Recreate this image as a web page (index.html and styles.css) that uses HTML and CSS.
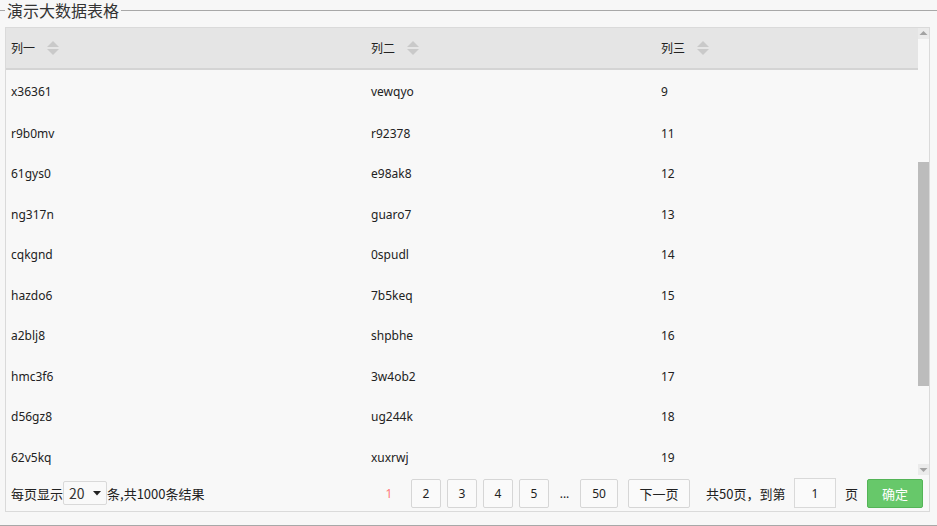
FILE: index.html
```html
<!DOCTYPE html>
<html lang="zh">
<head>
<meta charset="utf-8">
<title>演示大数据表格</title>
<link rel="stylesheet" href="styles.css">
</head>
<body>
<fieldset class="frame">
  <legend class="frame-title">演示大数据表格</legend>
  <div class="panel">
    <div class="grid-area">
      <div class="grid-main">
        <div class="grid-head">
          <div class="hcell">列一<svg class="sort" width="12" height="14" viewBox="0 0 12 14"><path d="M6 0 L12 6 L0 6 Z" fill="#c9c9c9"/><path d="M0 8 L12 8 L6 14 Z" fill="#c9c9c9"/></svg></div>
          <div class="hcell">列二<svg class="sort" width="12" height="14" viewBox="0 0 12 14"><path d="M6 0 L12 6 L0 6 Z" fill="#c9c9c9"/><path d="M0 8 L12 8 L6 14 Z" fill="#c9c9c9"/></svg></div>
          <div class="hcell">列三<svg class="sort" width="12" height="14" viewBox="0 0 12 14"><path d="M6 0 L12 6 L0 6 Z" fill="#c9c9c9"/><path d="M0 8 L12 8 L6 14 Z" fill="#c9c9c9"/></svg></div>
        </div>
        <div class="grid-body">
          <div class="row first"><span>x36361</span><span>vewqyo</span><span>9</span></div>
          <div class="row"><span>r9b0mv</span><span>r92378</span><span>11</span></div>
          <div class="row"><span>61gys0</span><span>e98ak8</span><span>12</span></div>
          <div class="row"><span>ng317n</span><span>guaro7</span><span>13</span></div>
          <div class="row"><span>cqkgnd</span><span>0spudl</span><span>14</span></div>
          <div class="row"><span>hazdo6</span><span>7b5keq</span><span>15</span></div>
          <div class="row"><span>a2blj8</span><span>shpbhe</span><span>16</span></div>
          <div class="row"><span>hmc3f6</span><span>3w4ob2</span><span>17</span></div>
          <div class="row"><span>d56gz8</span><span>ug244k</span><span>18</span></div>
          <div class="row"><span>62v5kq</span><span>xuxrwj</span><span>19</span></div>
        </div>
      </div>
      <div class="vscroll">
        <div class="sb-btn"><svg width="11" height="11" viewBox="0 0 11 11"><path d="M1.5 7 L5.5 3 L9.5 7 Z" fill="#a3a3a3"/></svg></div>
        <div class="sb-track"><div class="sb-thumb"></div></div>
        <div class="sb-btn"><svg width="11" height="11" viewBox="0 0 11 11"><path d="M1.5 4 L9.5 4 L5.5 8 Z" fill="#a3a3a3"/></svg></div>
      </div>
    </div>
    <div class="pager">
      <div class="pager-left">
        <span>每页显示</span>
        <div class="select"><span>20</span><svg width="8" height="5" viewBox="0 0 8 5"><path d="M0 0 L8 0 L4 4.5 Z" fill="#222"/></svg></div>
        <span>条,共1000条结果</span>
      </div>
      <div class="pager-right">
        <span class="pg-cur">1</span>
        <span class="pg-btn">2</span>
        <span class="pg-btn">3</span>
        <span class="pg-btn">4</span>
        <span class="pg-btn">5</span>
        <span class="pg-dots">...</span>
        <span class="pg-btn w50">50</span>
        <span class="pg-btn next">下一页</span>
        <span class="pg-total">共50页，到第</span>
        <span class="pg-input">1</span>
        <span class="pg-unit">页</span>
        <span class="pg-go">确定</span>
      </div>
    </div>
  </div>
</fieldset>
</body>
</html>
```
FILE: styles.css
```css
html, body {
  margin: 0;
  padding: 0;
  background: #f7f7f7;
}
body {
  font-family: "Noto Sans", "Noto Sans CJK SC", sans-serif;
  font-size: 12px;
  color: #222;
}
.frame {
  box-sizing: border-box;
  height: 526px;
  margin: 0;
  padding: 7px 0 0 5px;
  border: none;
  border-top: 1px solid #a8a8a8;
  border-bottom: 1px solid #a8a8a8;
  min-width: 0;
}
.frame-title {
  padding: 0 2px;
  font-size: 16px;
  line-height: 20px;
  color: #333;
  font-family: "Noto Sans CJK SC", sans-serif;
}
.panel {
  width: 923px;
  height: 483px;
  border: 1px solid #dadada;
  background: #f8f8f8;
  display: flex;
  flex-direction: column;
}
.grid-area {
  height: 447px;
  display: flex;
}
.grid-main {
  width: 912px;
  overflow: hidden;
}
.grid-head {
  height: 40px;
  background: #e5e5e5;
  border-bottom: 2px solid #d4d4d4;
  display: grid;
  grid-template-columns: 360px 290px 1fr;
}
.hcell {
  display: flex;
  align-items: center;
  padding-left: 5px;
  color: #222;
}
.sort {
  margin-left: 12px;
}
.grid-body {
  display: flex;
  flex-direction: column;
}
.row {
  flex: none;
  height: 40.5px;
  display: grid;
  grid-template-columns: 360px 290px 1fr;
  align-items: center;
}
.row.first {
  height: 42px;
  margin-bottom: 1px;
}
.row span {
  padding-left: 5px;
}
.vscroll {
  width: 11px;
  margin-left: 0;
  display: flex;
  flex-direction: column;
}
.sb-btn {
  height: 11px;
  background: #ebebeb;
  display: flex;
}
.sb-track {
  flex: 1;
  padding-top: 123px;
}
.sb-thumb {
  height: 224px;
  background: #bcbcbc;
}
.pager {
  flex: 1;
  display: flex;
  align-items: center;
  padding: 0 6px 0 5px;
}
.pager-left {
  display: flex;
  align-items: center;
  font-size: 13px;
  font-family: "Noto Sans CJK SC", sans-serif;
}
.select {
  box-sizing: border-box;
  width: 44px;
  height: 24px;
  border: 1px solid #d9d9d9;
  border-radius: 2px;
  background: #f9f9f9;
  display: flex;
  align-items: center;
  justify-content: space-between;
  padding: 0 5px 0 5px;
  font-size: 14px;
  color: #333;
}
.pager-right {
  margin-left: auto;
  display: flex;
  align-items: center;
}
.pg-cur, .pg-btn, .pg-dots, .pg-input, .pg-unit, .pg-go, .pg-total {
  box-sizing: border-box;
  display: flex;
  align-items: center;
  justify-content: center;
}
.pg-cur {
  width: 30px;
  height: 29px;
  color: #ff7a7a;
  margin-right: 7px;
}
.pg-btn {
  width: 30px;
  height: 29px;
  border: 1px solid #d6d6d6;
  border-radius: 2px;
  background: #fafafa;
  color: #222;
  margin-right: 6px;
}
.pg-btn:nth-of-type(5) {
  margin-right: 0;
}
.pg-dots {
  width: 31px;
  height: 29px;
}
.pg-btn.w50 {
  width: 38px;
  margin-right: 10px;
}
.pg-btn.next {
  width: 62px;
  margin-right: 0;
  font-size: 13px;
}
.pg-total {
  width: 104px;
  padding-left: 16px;
  justify-content: flex-start;
  font-size: 13px;
  font-family: "Noto Sans CJK SC", sans-serif;
}
.pg-input {
  width: 42px;
  height: 30px;
  border: 1px solid #d9d9d9;
  background: #fafafa;
}
.pg-unit {
  width: 31px;
  justify-content: flex-start;
  padding-left: 9px;
  font-size: 13px;
}
.pg-go {
  width: 56px;
  height: 29px;
  background: #67c86a;
  border: 1px solid #54b457;
  border-radius: 2px;
  color: #fff;
  font-size: 13px;
}
```
